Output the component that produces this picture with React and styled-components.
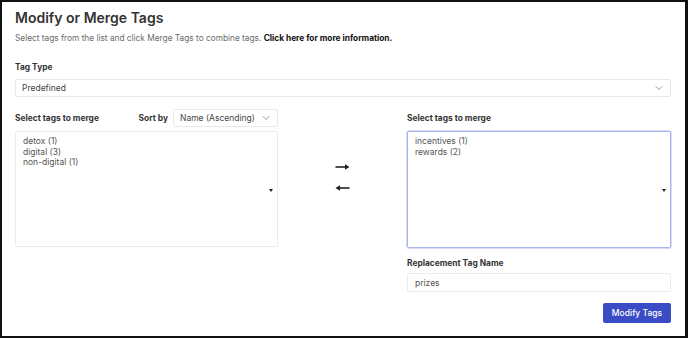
import React from "react";
import styled, { createGlobalStyle } from "styled-components";
import { ChevronDown } from "lucide-react";

const GlobalStyle = createGlobalStyle`
  * {
    margin: 0;
    padding: 0;
    box-sizing: border-box;
  }
  body {
    background: #ffffff;
    font-family: Inter, "Noto Sans", sans-serif;
    color: #333;
  }
`

const Frame = styled.div`
  width: 688px;
  height: 338px;
  border: 2px solid #111;
  border-right-width: 3px;
  padding: 7px 14px 0 13px;
  display: flex;
  flex-direction: column;
`

const Title = styled.h1`
  font-size: 14px;
  font-weight: 600;
  color: #333;
  line-height: 17px;
`

const Intro = styled.p`
  margin-top: 7px;
  font-size: 8.3px;
  color: #6b6b6b;
  line-height: 11px;
  b {
    color: #111;
    font-weight: 700;
  }
`

const Label = styled.div`
  font-size: 8.4px;
  font-weight: 700;
  color: #333;
  line-height: 11px;
`

const TagTypeLabel = styled(Label)`
  margin-top: 18px;
`

const SelectBox = styled.div`
  margin-top: ${p => p.$top || 0}px;
  width: ${p => p.$width || "100%"};
  height: 18px;
  border: 1px solid #e8e8e8;
  border-radius: 2px;
  display: flex;
  align-items: center;
  justify-content: space-between;
  padding: 0 5px 0 6px;
  font-size: 8.5px;
  color: #444;
  svg {
    color: #777;
  }
`

const Columns = styled.div`
  margin-top: 12px;
  display: grid;
  grid-template-columns: 263px 1fr 264px;
`

const Column = styled.div`
  display: flex;
  flex-direction: column;
`

const HeadRow = styled.div`
  height: 18px;
  display: flex;
  align-items: center;
  justify-content: space-between;
`

const SortGroup = styled.div`
  display: flex;
  align-items: center;
  gap: 5px;
`

const ListBox = styled.div`
  margin-top: 4px;
  height: ${p => (p.$active ? 117 : 116)}px;
  border: 1px solid ${p => (p.$active ? "#a9b4ec" : "#ececec")};
  box-shadow: ${p => (p.$active ? "0 0 0 1px #d6dcf7" : "none")};
  border-radius: 2px;
  padding: 4px 7px;
  position: relative;
  font-size: 8.5px;
  line-height: 10.5px;
  color: #555;
  &::after {
    content: "";
    position: absolute;
    right: 4px;
    top: 57px;
    border-left: 2.5px solid transparent;
    border-right: 2.5px solid transparent;
    border-top: 3px solid #222;
  }
`

const Arrows = styled.div`
  display: flex;
  flex-direction: column;
  align-items: center;
  padding-top: 54px;
  gap: 13px;
  color: #222;
`

const InputBox = styled.div`
  margin-top: 4px;
  height: 19px;
  border: 1px solid #ececec;
  border-radius: 2px;
  display: flex;
  align-items: center;
  padding: 0 7px;
  font-size: 8.5px;
  color: #555;
`

const ReplaceLabel = styled(Label)`
  margin-top: 10px;
`

const Actions = styled.div`
  margin-top: 11px;
  display: flex;
  justify-content: flex-end;
`

const Button = styled.button`
  height: 20px;
  width: 68px;
  border: none;
  border-radius: 2px;
  background: #3a4bc6;
  color: #fff;
  font-family: Inter, "Noto Sans", sans-serif;
  font-size: 8.5px;
  font-weight: 500;
`

const Arrow = ({ left }) => (
  <svg width="15" height="8" viewBox="0 0 15 8">
    <g transform={left ? "translate(15 0) scale(-1 1)" : undefined}>
      <line x1="0.5" y1="4" x2="12" y2="4" stroke="currentColor" strokeWidth="1.6" />
      <path d="M10 1.2 L14.5 4 L10 6.8 Z" fill="currentColor" />
    </g>
  </svg>
)

const leftTags = ["detox (1)", "digital (3)", "non-digital (1)"]
const rightTags = ["incentives (1)", "rewards (2)"]

export default function App() {
  return (
    <Frame>
      <GlobalStyle />
      <Title>Modify or Merge Tags</Title>
      <Intro>
        Select tags from the list and click Merge Tags to combine tags. <b>Click here for more information.</b>
      </Intro>
      <TagTypeLabel>Tag Type</TagTypeLabel>
      <SelectBox $top={6}>
        <span>Predefined</span>
        <ChevronDown size={12} strokeWidth={1.5} />
      </SelectBox>
      <Columns>
        <Column>
          <HeadRow>
            <Label>Select tags to merge</Label>
            <SortGroup>
              <Label>Sort by</Label>
              <SelectBox $width="105px">
                <span>Name (Ascending)</span>
                <ChevronDown size={12} strokeWidth={1.5} />
              </SelectBox>
            </SortGroup>
          </HeadRow>
          <ListBox>
            {leftTags.map(t => (
              <div key={t}>{t}</div>
            ))}
          </ListBox>
        </Column>
        <Arrows>
          <Arrow />
          <Arrow left />
        </Arrows>
        <Column>
          <HeadRow>
            <Label>Select tags to merge</Label>
          </HeadRow>
          <ListBox $active>
            {rightTags.map(t => (
              <div key={t}>{t}</div>
            ))}
          </ListBox>
          <ReplaceLabel>Replacement Tag Name</ReplaceLabel>
          <InputBox>prizes</InputBox>
          <Actions>
            <Button>Modify Tags</Button>
          </Actions>
        </Column>
      </Columns>
    </Frame>
  );
}
